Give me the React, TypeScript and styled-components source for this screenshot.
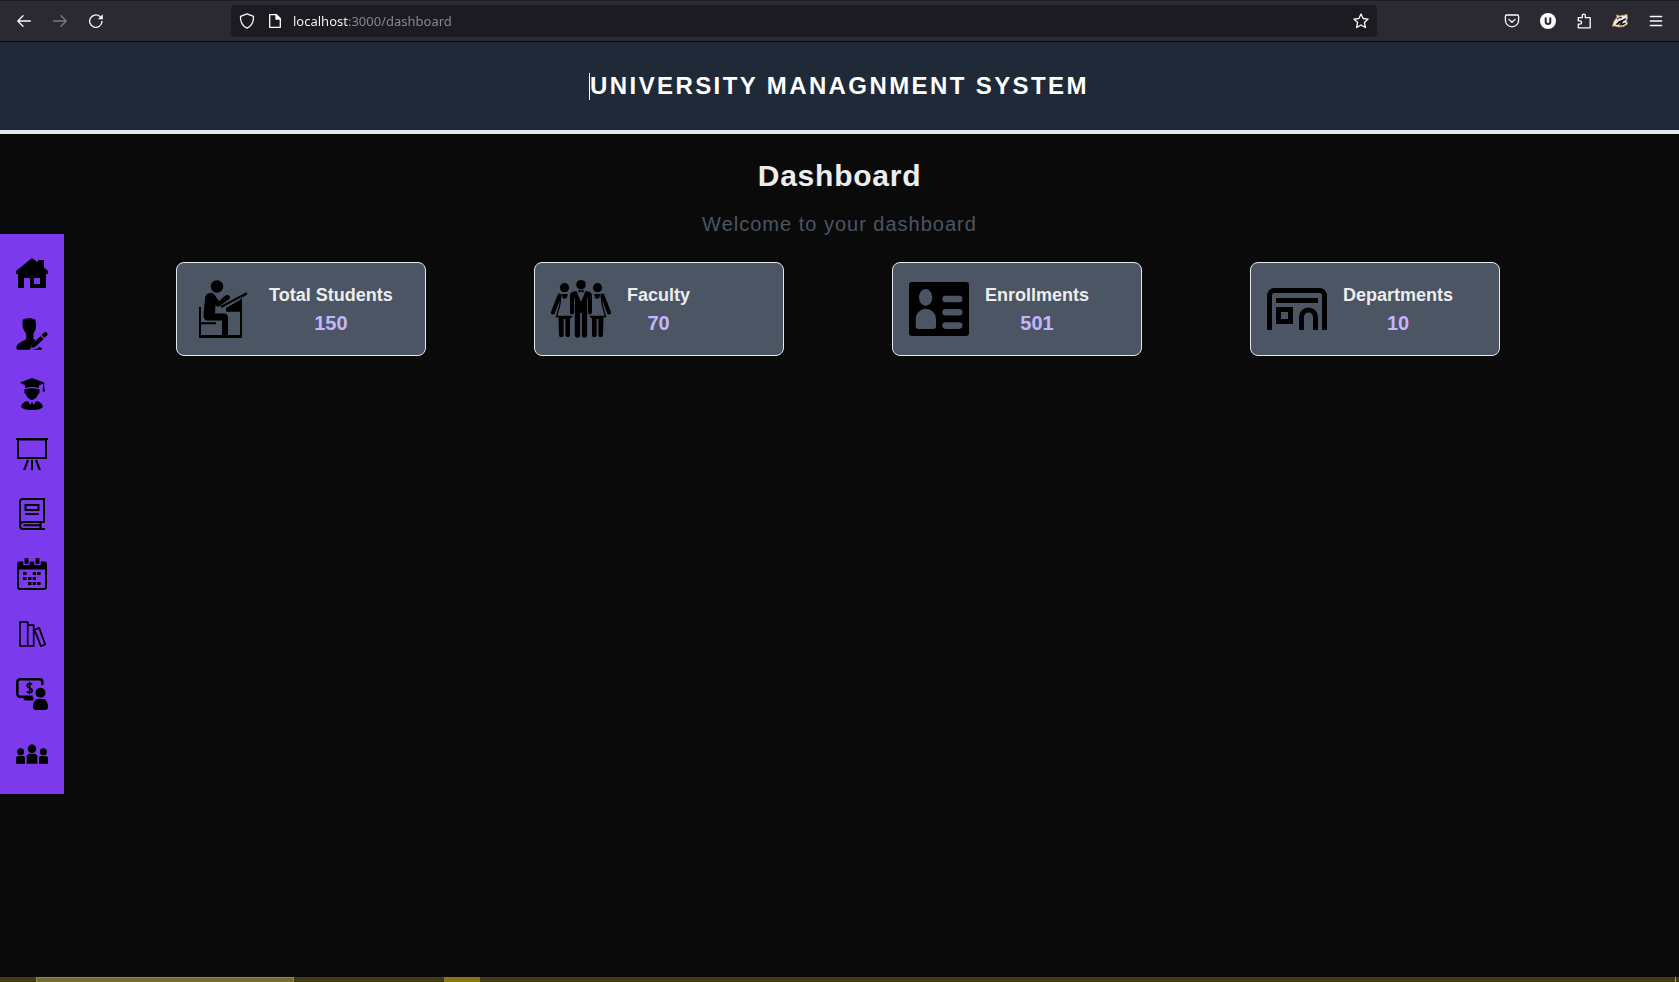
import React from "react";
import styled, { createGlobalStyle } from "styled-components";

const GlobalStyle = createGlobalStyle`
  *, *::before, *::after { box-sizing: border-box; }
  body {
    margin: 0;
    background: #0a0a0a;
    color: #ededed;
    font-family: "Liberation Sans", Arial, Helvetica, sans-serif;
  }
  h1, h2, h3, p, ul { margin: 0; padding: 0; }
`;

const Screen = styled.div`
  display: flex;
  flex-direction: column;
  min-height: 100vh;
`;

/* Browser toolbar */

const Toolbar = styled.div`
  display: flex;
  align-items: center;
  height: 42px;
  padding: 0 5px 0 6px;
  background: #2b2a33;
  border-top: 1px solid #1c1b22;
  border-bottom: 1px solid #0c0c0d;
`;

const ToolButton = styled.button<{ $dim?: boolean }>`
  display: grid;
  place-items: center;
  width: 36px;
  height: 32px;
  padding: 0;
  border: 0;
  background: none;
  color: ${(p) => (p.$dim ? "#7d7c83" : "#fbfbfe")};
`;

const AddressBar = styled.div`
  flex: 1;
  display: flex;
  align-items: center;
  height: 32px;
  margin: 0 117px;
  background: #1c1b22;
  border-radius: 4px;
`;

const AddressButton = styled(ToolButton)<{ $wide?: boolean }>`
  width: ${(p) => (p.$wide ? 32 : 24)}px;
`;

const AddressInput = styled.input`
  flex: 1;
  min-width: 0;
  height: 32px;
  margin-left: 6px;
  padding: 0;
  border: 0;
  outline: 0;
  font: 13px/20px "Noto Sans", "Open Sans", sans-serif;
  color: transparent;
  background: linear-gradient(90deg, #fbfbfe 55px, #8b8a91 55px);
  background-clip: text;
  -webkit-background-clip: text;
`;

/* Page header */

const Header = styled.header`
  display: flex;
  justify-content: center;
  padding: 28px 0;
  background: #1f2937;
  border-bottom: 4px solid #e5e7eb;
`;

const SystemTitle = styled.h1`
  position: relative;
  font-size: 24px;
  line-height: 32px;
  letter-spacing: 0.1em;
  color: #fff;

  &::before {
    content: "";
    position: absolute;
    left: -1px;
    top: 3px;
    width: 1px;
    height: 27px;
    background: #fff;
  }
`;

/* Body */

const Body = styled.div`
  flex: 1;
  display: grid;
  grid-template-columns: 64px 1fr 64px;
  align-items: start;
`;

const Sidebar = styled.nav`
  margin-top: 100px;
  padding: 24px 16px;
  background: #7c3aed;
`;

const NavList = styled.ul`
  display: flex;
  flex-direction: column;
  gap: 28px;
  list-style: none;
`;

const NavLink = styled.a`
  display: block;
  color: #000;

  svg { display: block; width: 32px; height: 32px; }
`;

const Main = styled.main`
  display: flex;
  flex-direction: column;
  padding-top: 24px;
  text-align: center;
`;

const PageTitle = styled.h2`
  font-size: 30px;
  line-height: 36px;
  letter-spacing: 0.025em;
`;

const Welcome = styled.p`
  && { margin: 16px 0 24px; }
  font-size: 20px;
  line-height: 28px;
  letter-spacing: 0.05em;
  color: #4b5563;
`;

const Cards = styled.section`
  display: flex;
  flex-wrap: wrap;
  justify-content: space-around;
  row-gap: 24px;
  padding: 0 61px 0 58px;
`;

const Card = styled.article`
  display: flex;
  align-items: center;
  gap: 16px;
  width: 250px;
  height: 94px;
  padding: 16px;
  background: #4b5563;
  border: 1px solid #e5e7eb;
  border-radius: 8px;

  svg { flex: none; width: 60px; height: 60px; color: #000; }
`;

const CardTitle = styled.h3`
  font-size: 18px;
  line-height: 28px;
`;

const CardValue = styled.p`
  font-size: 20px;
  font-weight: 700;
  line-height: 28px;
  color: #c4b5fd;
`;

/* Desktop task bar */

const TaskBar = styled.footer`
  display: flex;
  height: 5px;
  background: #433912;
`;

const Task = styled.div<{ $kind: "window" | "alert" }>`
  width: ${(p) => (p.$kind === "window" ? 258 : 36)}px;
  margin-left: ${(p) => (p.$kind === "window" ? 36 : 150)}px;
  background: ${(p) => (p.$kind === "window" ? "#776b33" : "#8a7618")};
  border: solid #918759;
  border-width: ${(p) => (p.$kind === "window" ? "1px 1px 0" : "0")};
`;

const ShowDesktop = styled.div`
  width: 4px;
  margin-left: auto;
  border-left: 1px solid #a39d84;
`;

/* Toolbar icons */

const Glyph = ({ children, size = 16 }: { children: React.ReactNode; size?: number }) => (
  <svg width={size} height={size} viewBox={`0 0 ${size} ${size}`} fill="none" stroke="currentColor" strokeWidth="1.3" strokeLinecap="round" strokeLinejoin="round" aria-hidden="true">
    {children}
  </svg>
);

const BackIcon = () => <Glyph><path d="M14.3 8H2M7 2.8 1.8 8 7 13.2" /></Glyph>;
const ForwardIcon = () => <Glyph><path d="M1.7 8H14M9 2.8 14.2 8 9 13.2" /></Glyph>;
const ReloadIcon = () => (
  <Glyph>
    <path d="M14 8.5A6.2 6.2 0 1 1 12 3.6" />
    <path d="M14.8 1.3v4.9H9.9z" fill="currentColor" stroke="none" />
  </Glyph>
);
const ShieldIcon = () => <Glyph><path d="M8 .9 14.5 3.4c.3 4.8-1.2 9.3-6.5 11.8C2.7 12.7 1.2 8.2 1.5 3.4z" /></Glyph>;
const PageIcon = () => (
  <Glyph>
    <path d="M3.5 1.7h5.800l4 4v8.600H2.700V1.700z" />
    <path d="M9 1.500v4.500h4.500z" fill="currentColor" />
  </Glyph>
);
const StarIcon = () => <Glyph><path d="m8 .9 2.100 4.600 5 .6-3.700 3.400 1 5L8 12l-4.400 2.500 1-5L.900 6.100l5-.6z" /></Glyph>;
const PocketIcon = () => (
  <Glyph>
    <path d="M2.600 2h10.800c.700 0 1.200.5 1.200 1.200v4a6.600 6.600 0 0 1-13.200 0v-4C1.400 2.500 1.900 2 2.600 2z" />
    <path d="M4.900 6.400 8 9.300l3.100-2.900" />
  </Glyph>
);
const UserBadgeIcon = () => (
  <Glyph>
    <circle cx="8" cy="8" r="8" fill="currentColor" stroke="none" />
    <path d="M5.700 4.600v4.100a2.300 2.300 0 0 0 4.600 0V4.600" stroke="#2b2a33" strokeWidth="2" strokeLinecap="butt" />
  </Glyph>
);
const PuzzleIcon = () => (
  <Glyph>
    <path d="M2.300 14.800V11.200h1.600a1.600 1.600 0 0 0 0-3.400H2.300V4.700h4V2.600a1.500 1.500 0 0 1 3 0v2.100h4.900v10.100z" />
  </Glyph>
);
const BadgerIcon = () => (
  <Glyph>
    <path d="M.6 13C1 10 2.500 6.500 5 4.500L4.800 1.800 7.500 3l4.500-.8L15 1.500l.4 3.500-.9 2.500 1 3.500-4 2.500-5 .5-3.500-1z" fill="#f1ece4" stroke="#d29361" strokeWidth=".9" />
    <path d="M3.500 11.500 7 8l3-1 3.500-2 .5 1.500L11.500 8l-1.700 2.500 3.200-.8 1 .8-3 1.700-4 .3 1.500-3.300-2.500 2.800z" fill="#17151a" stroke="none" />
    <path d="m5.500 6 2.200-1.600 1.800.2" stroke="#3a353a" strokeWidth="1.100" />
  </Glyph>
);
const MenuIcon = () => <Glyph><path d="M2.300 3.500h11.400M2.300 8h11.400M2.300 12.500h11.400" /></Glyph>;

/* Sidebar icons */

const NavIcon = ({ children }: { children: React.ReactNode }) => (
  <svg viewBox="0 0 32 32" fill="currentColor" aria-hidden="true">{children}</svg>
);

const HomeIcon = () => (
  <NavIcon>
    <path fillRule="evenodd" d="M16 0 22 4.500V2h6v7.500l4 3.500v3h-2v14H14V20H8v10H2V16H0v-3zM18 20v6h6v-6z" />
  </NavIcon>
);
const ProfileIcon = () => (
  <NavIcon>
    <path d="M7 1.500C10-.3 16-.3 19 1.500c1 2 1.200 6 .6 9.500-.4 2-1.600 3-2.100 4.500v5.500l2.200 1.300c-2.700 2.500-5 5.500-5.500 9.500H2C.5 31.800.2 30 .7 28c.8-2.800 5.500-4.200 9.100-6.500.6-2 .6-4 .2-6-.8-1.300-2-2.400-2.600-4.500C6.200 8 6 4 7 1.500z" />
    <path d="M17.200 25.200 24.600 18l3 3-7.700 7.200c-1.300 1.100-3.200 1.600-4.700 1.600.1-1.700.7-3.400 2-4.600zM25.500 17.100l2.900-2.700c1.500-1.300 4 1 2.900 2.700l-2.900 3z" />
    <path d="M16 31.900c3-.2 5.500-1.500 7.500-3.200 1.500.5 2.500 1.500 2.500 2.300 0 .7-.5.9-1.500.9z" />
  </NavIcon>
);
const GraduateIcon = () => (
  <NavIcon>
    <path d="M16 0 28.200 4.400V9l.8 4.500h-2.500L27 9V5.800l-4 1.500v2.800c-4.500-1.600-9.500-1.600-14 0V7.300L4 4.600z" />
    <path d="M8.300 11.500c5-1.700 10.400-1.700 15.400 0l-.2 3.500-1.500 1.300c-.8 3-3.700 5.700-6 5.700s-5.200-2.700-6-5.700L8.500 15z" />
    <path d="m11.500 23 3.200 4 .6-2.500h1.400l.6 2.500 3.200-4c3.500.8 6 2.700 6.200 5.500 0 2-4.700 3.500-10.700 3.500S5.300 30.500 5.300 28.500c.2-2.800 2.700-4.700 6.200-5.500z" />
  </NavIcon>
);
const BoardIcon = () => (
  <NavIcon>
    <path fillRule="evenodd" d="M0 0h32v2h-1v19H1V2H0zM3 2.500V19h26V2.500zM15 22h2v10h-2zM10.900 22h2.100L9.300 32H7zM19 22h2.100L25 32h-2.300z" />
  </NavIcon>
);
const BookIcon = () => (
  <NavIcon>
    <g fill="none" stroke="currentColor" strokeWidth="2">
      <path d="M28 1H7a3 3 0 0 0-3 3v23.500M28 0v24H7.300C2.900 24 2.900 31 7.300 31H29M24.500 24v7M7.500 27.300H25" />
      <path d="M9.500 7h13v5h-13zM9.200 16h13.600" />
    </g>
  </NavIcon>
);
const CalendarIcon = () => (
  <NavIcon>
    <path d="M2.500 3.500h4.700V7h6.400V3.500h4.600V7h6.600V3.500h4.700L31 5v6.500H1V5z" />
    <path d="M2 10.500V29a2 2 0 0 0 2 2h24a2 2 0 0 0 2-2V10.500" fill="none" stroke="currentColor" strokeWidth="2" />
    <rect x="8.500" width="4" height="6" rx="1" />
    <rect x="19.500" width="4" height="6" rx="1" />
    <path d="M7 14h3.500v3H7zM16.700 14H20v3h-3.300zM21.200 14h3.400v3h-3.400zM7 19h3.500v3H7zM12 19h3.500v3H12zM16.700 19H20v3h-3.300zM12 24h3.500v3H12zM16.700 24H20v3h-3.300zM21.200 24h3.400v3h-3.400z" />
  </NavIcon>
);
const LibraryIcon = () => (
  <NavIcon>
    <g fill="none" stroke="currentColor" strokeWidth="1.700" strokeLinejoin="round">
      <path d="M4 4h7.700v24H4zM11.700 7.200h6V28h-6zM18.500 11.800l4.700-1.900 6 16.600-4.300 1.600z" />
    </g>
  </NavIcon>
);
const PaymentIcon = () => (
  <NavIcon>
    <path d="M26.300 7V4a2.700 2.700 0 0 0-2.700-2.700H4A2.700 2.700 0 0 0 1.300 4v12A2.700 2.700 0 0 0 4 18.700h12.500" fill="none" stroke="currentColor" strokeWidth="2.600" />
    <path d="M7 18.500h9.500l1.500 2.200-1.500 1.800H9.500C8 22.500 7 20.500 7 18.500z" />
    <path d="M16.200 6.300C14.500 5 11 5.200 11 7.500c0 2.800 5.300 2 5.300 5 0 2.500-3.800 2.500-5.600 1.300M13.600 3.800V16" fill="none" stroke="currentColor" strokeWidth="1.700" />
    <circle cx="24.500" cy="14.700" r="5" />
    <path d="M20.500 21h8c2.300 1.800 3.500 4.300 3.500 7.500 0 2.500-1 3.500-3 3.500h-9c-2 0-3-1-3-3.500 0-3.200 1.200-5.700 3.500-7.500z" />
  </NavIcon>
);
const GroupIcon = () => (
  <NavIcon>
    <circle cx="16" cy="10.700" r="4.300" />
    <circle cx="4.600" cy="13.700" r="3.500" />
    <circle cx="27.400" cy="13.700" r="3.500" />
    <path d="M12.500 15.800h7l1.900 2V25.700H10.600v-7.900zM1.500 18H8l1 1.500v6.200H0v-6.200zM24 18h6.500l1.500 1.500v6.200h-9v-6.200z" />
  </NavIcon>
);

/* Card icons */

const CardIcon = ({ children }: { children: React.ReactNode }) => (
  <svg viewBox="0 0 60 60" fill="currentColor" aria-hidden="true">{children}</svg>
);

const StudentDeskIcon = () => (
  <CardIcon>
    <circle cx="24" cy="7.500" r="6.200" />
    <path d="M17.500 14c3 0 4.500 2 5.500 4l3 4.200 6-5.500c3-2.200 6.500.5 4.300 3.300l-9.500 7c-1.800 1-3.300.5-4.300-.7l-.5 8.200h8.500c3 0 4.500 1.500 4.500 4V57h-6V41.500H15.500c-3.500 0-5.300-2-5-5.500l1.500-16c.3-4 2.500-6 5.500-6z" />
    <path d="M6 28h2v15.200h15v2H8V56h39V32.700H33V29l14-8 6-7 1 1.500L49 19v40H6z" />
    <path d="M28 28 54 14.200" stroke="currentColor" strokeWidth="2" />
  </CardIcon>
);

const Woman = () => (
  <>
    <circle cx="13.500" cy="8.700" r="4.600" />
    <path d="M8.500 16.500 2 33.500" stroke="currentColor" strokeWidth="4" strokeLinecap="round" />
    <path d="M10.500 15h6.500l-1.500 4.500h-3.500z" />
    <path d="M9.700 17 9 25 5.500 37.500h15.800" fill="none" stroke="currentColor" strokeWidth="1.300" />
    <path d="M7.500 37.500h13.500l-2 2.200V56a2.300 2.300 0 0 1-4.600 0V40h-1.800v16A2.300 2.300 0 0 1 8 56z" />
  </>
);

const FacultyIcon = () => (
  <CardIcon>
    <Woman />
    <g transform="translate(60 0) scale(-1 1)"><Woman /></g>
    <circle cx="30" cy="5.700" r="4.800" />
    <path d="m27.500 10.500 2.500 1.200 2.500-1.200v3.200L30 12.500l-2.500 1.200z" />
    <path d="M25.500 12 30 23l4.500-11c4 .3 6.500 1.500 6.500 5v16.500a2 2 0 0 1-4 0V19h-.8v37a2.600 2.600 0 0 1-5.300 0V34h-1.800v22a2.600 2.600 0 0 1-5.300 0V19H23v14.500a2 2 0 0 1-4 0V17c0-3.500 2.500-4.700 6.500-5z" />
  </CardIcon>
);

const EnrollmentIcon = () => (
  <CardIcon>
    <path
      fillRule="evenodd"
      d="M3 3h54a3 3 0 0 1 3 3v48a3 3 0 0 1-3 3H3a3 3 0 0 1-3-3V6a3 3 0 0 1 3-3zM16.700 9.900C13 9.900 10 13.700 10 18.300s3 8.400 6.700 8.400 6.600-3.800 6.600-8.400-3-8.400-6.600-8.400zM6.700 40v7.300a2.700 2.700 0 0 0 2.700 2.700h14.900a2.700 2.700 0 0 0 2.700-2.700V40a10 10 0 0 0-20.300 0zM36.600 16.700a3.300 3.300 0 0 0 0 6.600h13.600a3.300 3.300 0 0 0 0-6.600zM36.600 30a3.300 3.300 0 0 0 0 6.600h13.600a3.300 3.300 0 0 0 0-6.600zM36.600 43.300a3.300 3.300 0 0 0 0 6.600h13.600a3.300 3.300 0 0 0 0-6.600z"
    />
  </CardIcon>
);

const DepartmentIcon = () => (
  <CardIcon>
    <g fill="none" stroke="currentColor" strokeWidth="5">
      <path d="M2.500 51V16.500a5 5 0 0 1 5-5h45a5 5 0 0 1 5 5V51M9 21.500h42M11.500 30.500h12v12h-12zM34.500 51V38a7 7 0 0 1 14 0v13" />
    </g>
  </CardIcon>
);

const navItems = [
  { label: "Home", Icon: HomeIcon },
  { label: "Profile", Icon: ProfileIcon },
  { label: "Students", Icon: GraduateIcon },
  { label: "Classes", Icon: BoardIcon },
  { label: "Courses", Icon: BookIcon },
  { label: "Calendar", Icon: CalendarIcon },
  { label: "Library", Icon: LibraryIcon },
  { label: "Payments", Icon: PaymentIcon },
  { label: "Groups", Icon: GroupIcon },
];

const stats = [
  { title: "Total Students", value: 150, Icon: StudentDeskIcon },
  { title: "Faculty", value: 70, Icon: FacultyIcon },
  { title: "Enrollments", value: 501, Icon: EnrollmentIcon },
  { title: "Departments", value: 10, Icon: DepartmentIcon },
];

export default function App() {
  return (
    <Screen>
      <GlobalStyle />
      <Toolbar>
        <ToolButton aria-label="Back"><BackIcon /></ToolButton>
        <ToolButton aria-label="Forward" $dim><ForwardIcon /></ToolButton>
        <ToolButton aria-label="Reload"><ReloadIcon /></ToolButton>
        <AddressBar>
          <AddressButton aria-label="Tracking protection" $wide><ShieldIcon /></AddressButton>
          <AddressButton aria-label="Site information"><PageIcon /></AddressButton>
          <AddressInput aria-label="Address" defaultValue="localhost:3000/dashboard" spellCheck={false} />
          <AddressButton aria-label="Bookmark this page" $wide><StarIcon /></AddressButton>
        </AddressBar>
        <ToolButton aria-label="Save to Pocket"><PocketIcon /></ToolButton>
        <ToolButton aria-label="Account"><UserBadgeIcon /></ToolButton>
        <ToolButton aria-label="Extensions"><PuzzleIcon /></ToolButton>
        <ToolButton aria-label="Privacy extension"><BadgerIcon /></ToolButton>
        <ToolButton aria-label="Menu"><MenuIcon /></ToolButton>
      </Toolbar>
      <Header>
        <SystemTitle>UNIVERSITY MANAGNMENT SYSTEM</SystemTitle>
      </Header>
      <Body>
        <Sidebar aria-label="Sections">
          <NavList>
            {navItems.map(({ label, Icon }) => (
              <li key={label}>
                <NavLink href="#" aria-label={label}><Icon /></NavLink>
              </li>
            ))}
          </NavList>
        </Sidebar>
        <Main>
          <PageTitle>Dashboard</PageTitle>
          <Welcome>Welcome to your dashboard</Welcome>
          <Cards>
            {stats.map(({ title, value, Icon }) => (
              <Card key={title}>
                <Icon />
                <div>
                  <CardTitle>{title}</CardTitle>
                  <CardValue>{value}</CardValue>
                </div>
              </Card>
            ))}
          </Cards>
        </Main>
      </Body>
      <TaskBar>
        <Task $kind="window" />
        <Task $kind="alert" />
        <ShowDesktop />
      </TaskBar>
    </Screen>
  );
}
